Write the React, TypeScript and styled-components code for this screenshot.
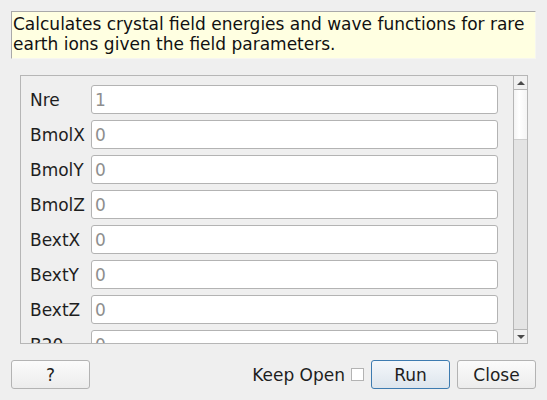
import styled, {createGlobalStyle} from "styled-components";

const fields = [
  {name: "Nre", value: "1"},
  {name: "BmolX", value: "0"},
  {name: "BmolY", value: "0"},
  {name: "BmolZ", value: "0"},
  {name: "BextX", value: "0"},
  {name: "BextY", value: "0"},
  {name: "BextZ", value: "0"},
  {name: "B20", value: "0"},
];

function App() {
  return (
    <>
      <GlobalStyle/>
      <DivDialog>
        <DivDescription>
          Calculates crystal field energies and wave functions for rare earth ions given the field parameters.
        </DivDescription>
        <DivScrollArea>
          <DivForm>
            {fields.map(field => (
              <DivRow key={field.name}>
                <Label>{field.name}</Label>
                <Input placeholder={field.value}/>
              </DivRow>
            ))}
          </DivForm>
          <DivScrollBar>
            <DivArrowButton $top>
              <Arrow $up/>
            </DivArrowButton>
            <DivTrack>
              <DivHandle/>
            </DivTrack>
            <DivArrowButton>
              <Arrow/>
            </DivArrowButton>
          </DivScrollBar>
        </DivScrollArea>
        <DivButtons>
          <Button type="button">?</Button>
          <Spacer/>
          <LabelCheck>
            <span>Keep Open</span>
            <Check type="checkbox"/>
          </LabelCheck>
          <Button type="button" $default>Run</Button>
          <Button type="button">Close</Button>
        </DivButtons>
      </DivDialog>
    </>
  );
}

/* CSS */

const GlobalStyle = createGlobalStyle`
  body {
    margin: 0;
    background: #efefef;
    font-family: "DejaVu Sans", "Noto Sans", sans-serif;
    font-size: 17px;
    color: #1e1e1e;
  }
`;

const DivDialog = styled.div`
  box-sizing: border-box;
  width: 547px;
  height: 400px;
  padding: 11px;
  display: flex;
  flex-direction: column;
`;

const DivDescription = styled.div`
  box-sizing: border-box;
  height: 48px;
  padding: 2px 1px 0 1px;
  line-height: 20px;
  background: #ffffe1;
  border-top: 1px solid #a9a9a9;
  border-left: 1px solid #a9a9a9;
  border-right: 1px solid #f6f6f0;
  border-bottom: 1px solid #f6f6f0;
  color: #111;
`;

const DivScrollArea = styled.div`
  box-sizing: border-box;
  margin: 16px 8px 0 9px;
  height: 269px;
  display: flex;
  border: 1px solid #b6b6b6;
  border-right: none;
`;

const DivForm = styled.div`
  flex: 1;
  overflow: hidden;
  padding: 9px 15px 0 9px;
  display: flex;
  flex-direction: column;
  gap: 6px;
`;

const DivRow = styled.div`
  display: flex;
  align-items: center;
  flex-shrink: 0;
`;

const Label = styled.span`
  width: 61px;
  flex-shrink: 0;
  white-space: nowrap;
`;

const Input = styled.input`
  box-sizing: border-box;
  flex: 1;
  min-width: 0;
  height: 29px;
  padding: 0 3px;
  border: 1px solid #b3b3b3;
  border-radius: 3px;
  background: #fff;
  font: inherit;
  outline: none;

  &::placeholder {
    color: #8e8e8e;
  }
`;

const DivScrollBar = styled.div`
  box-sizing: border-box;
  width: 15px;
  display: flex;
  flex-direction: column;
  margin: -1px 0;
  border: 1px solid #b6b6b6;
`;

const DivArrowButton = styled.div<{ $top?: boolean }>`
  height: 13px;
  display: flex;
  align-items: center;
  justify-content: center;
  background: #f0f0f0;
  ${props => props.$top ? "border-bottom: 1px solid #b6b6b6;" : "border-top: 1px solid #b6b6b6;"}
`;

const Arrow = styled.div<{ $up?: boolean }>`
  width: 0;
  height: 0;
  border-left: 4px solid transparent;
  border-right: 4px solid transparent;
  ${props => props.$up ? "border-bottom: 4px solid #4a4a4a;" : "border-top: 4px solid #4a4a4a;"}
`;

const DivTrack = styled.div`
  flex: 1;
  background: #e4e4e4;
`;

const DivHandle = styled.div`
  height: 49px;
  background: linear-gradient(to right, #f4f4f4, #ffffff 40%, #f4f4f4);
  border-bottom: 1px solid #cfcfcf;
`;

const DivButtons = styled.div`
  margin-top: 16px;
  display: flex;
  align-items: center;
  gap: 7px;
`;

const Spacer = styled.div`
  flex: 1;
`;

const Button = styled.button<{ $default?: boolean }>`
  box-sizing: border-box;
  width: 79px;
  height: 29px;
  padding: 0;
  font: inherit;
  color: #1e1e1e;
  border-radius: 3px;
  border: 1px solid ${props => props.$default ? "#3d7bb0" : "#b3b3b3"};
  background: ${props => props.$default
    ? "linear-gradient(#f4f7fa, #dde5ed)"
    : "linear-gradient(#fbfbfb, #ececec)"};
`;

const LabelCheck = styled.label`
  display: flex;
  align-items: center;
  gap: 6px;
  white-space: nowrap;
`;

const Check = styled.input`
  appearance: none;
  box-sizing: border-box;
  width: 13px;
  height: 13px;
  margin: 0;
  border: 1px solid #b3b3b3;
  background: #fff;
`;

/* CSS */

export default App;
